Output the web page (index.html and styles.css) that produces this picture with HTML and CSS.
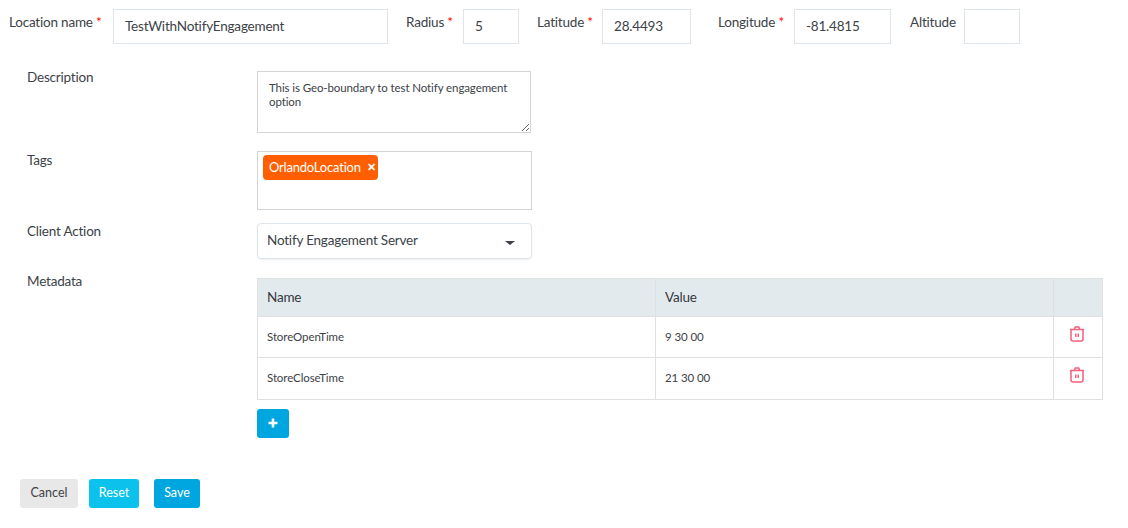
FILE: index.html
```html
<!DOCTYPE html>
<html lang="en">
<head>
  <meta charset="UTF-8" />
  <meta name="viewport" content="width=device-width, initial-scale=1" />
  <title>Edit Location</title>
  <link rel="stylesheet" href="styles.css">
</head>
<body>

<form class="location-form">
  <div class="top-row">
    <label class="top-label label-name">Location name <span class="req">*</span></label>
    <input class="text-input input-name" type="text" value="TestWithNotifyEngagement" />
    <label class="top-label label-radius">Radius <span class="req">*</span></label>
    <input class="text-input input-radius" type="text" value="5" />
    <label class="top-label label-lat">Latitude <span class="req">*</span></label>
    <input class="text-input input-lat" type="text" value="28.4493" />
    <label class="top-label label-long">Longitude <span class="req">*</span></label>
    <input class="text-input input-long" type="text" value="-81.4815" />
    <label class="top-label label-alt">Altitude</label>
    <input class="text-input input-alt" type="text" value="" />
  </div>

  <div class="form-row row-description">
    <label class="row-label">Description</label>
    <textarea class="description">This is Geo-boundary to test Notify engagement option</textarea>
  </div>

  <div class="form-row row-tags">
    <label class="row-label">Tags</label>
    <div class="tags-box">
      <span class="tag">OrlandoLocation<span class="tag-x">&#10005;</span></span>
    </div>
  </div>

  <div class="form-row row-action">
    <label class="row-label">Client Action</label>
    <div class="select-box">
      <span>Notify Engagement Server</span>
      <span class="caret"></span>
    </div>
  </div>

  <div class="form-row row-metadata">
    <label class="row-label">Metadata</label>
    <div class="metadata">
      <table class="meta-table">
        <thead>
          <tr>
            <th class="col-name">Name</th>
            <th class="col-value">Value</th>
            <th class="col-del"></th>
          </tr>
        </thead>
        <tbody>
          <tr>
            <td>StoreOpenTime</td>
            <td>9 30 00</td>
            <td class="del-cell">
              <svg class="trash" viewBox="0 0 16 16" width="16" height="16">
                <path d="M5.5 3 L6.2 1 L9.8 1 L10.5 3 M1 3.6 L15 3.6 M2 3.6 L2 13 Q2 15 4 15 L12 15 Q14 15 14 13 L14 3.6 M6.8 7.5 L6.8 11 M9.2 7.5 L9.2 11" fill="none" stroke="#f0627e" stroke-width="1.5"/>
              </svg>
            </td>
          </tr>
          <tr>
            <td>StoreCloseTime</td>
            <td>21 30 00</td>
            <td class="del-cell">
              <svg class="trash" viewBox="0 0 16 16" width="16" height="16">
                <path d="M5.5 3 L6.2 1 L9.8 1 L10.5 3 M1 3.6 L15 3.6 M2 3.6 L2 13 Q2 15 4 15 L12 15 Q14 15 14 13 L14 3.6 M6.8 7.5 L6.8 11 M9.2 7.5 L9.2 11" fill="none" stroke="#f0627e" stroke-width="1.5"/>
              </svg>
            </td>
          </tr>
        </tbody>
      </table>
      <button class="btn-add" type="button">
        <svg viewBox="0 0 12 12" width="12" height="12"><path d="M6 1.5 L6 10.5 M1.5 6 L10.5 6" stroke="#fff" stroke-width="2.6" fill="none"/></svg>
      </button>
    </div>
  </div>

  <div class="actions">
    <button class="btn btn-cancel" type="button">Cancel</button>
    <button class="btn btn-reset" type="button">Reset</button>
    <button class="btn btn-save" type="button">Save</button>
  </div>
</form>

</body>
</html>
```

FILE: styles.css
```css
body {
  margin: 0;
  background: #fff;
  font-family: Lato, "Open Sans", sans-serif;
  font-size: 13.5px;
  letter-spacing: -0.2px;
  color: #3c4248;
  overflow: hidden;
}
.location-form {
  padding-top: 9px;
}

/* top row */
.top-row {
  display: flex;
  align-items: flex-start;
  padding-left: 9px;
}
.top-label {
  line-height: 27px;
  white-space: nowrap;
}
.req {
  color: #f00;
}
.text-input {
  box-sizing: border-box;
  height: 35px;
  border: 1px solid #dde4ea;
  padding: 0 10px 2px 11px;
  font-family: inherit;
  font-size: 13.5px;
  letter-spacing: -0.2px;
  color: #3c4248;
  outline: none;
}
.label-name { width: 104px; }
.input-name { width: 275px; }
.label-radius { width: 57px; margin-left: 18px; }
.input-radius { width: 56px; }
.label-lat { width: 65px; margin-left: 18px; }
.input-lat { width: 89px; }
.label-long { width: 76px; margin-left: 27px; }
.input-long { width: 97px; }
.label-alt { width: 54px; margin-left: 19px; }
.input-alt { width: 56px; }

/* label + control rows */
.form-row {
  display: flex;
  align-items: flex-start;
  padding-left: 27px;
}
.row-label {
  width: 230px;
  flex: none;
  line-height: 12px;
}
.row-description { margin-top: 27px; }
.row-tags { margin-top: 18px; }
.row-tags .row-label { padding-top: 3px; }
.row-action { margin-top: 13px; }
.row-action .row-label { padding-top: 2px; }
.row-metadata { margin-top: 19px; }
.row-metadata .row-label { margin-top: -3px; }

.description {
  box-sizing: border-box;
  display: block;
  width: 274px;
  height: 62px;
  border: 1px solid #d4d4d4;
  padding: 9px 11px;
  font-family: inherit;
  font-size: 11.5px;
  letter-spacing: -0.1px;
  line-height: 14px;
  color: #3c4248;
  outline: none;
  resize: vertical;
}
.tags-box {
  box-sizing: border-box;
  width: 275px;
  height: 59px;
  border: 1px solid #d4d4d4;
  padding: 3px 5px;
}
.tag {
  display: inline-block;
  background: #ff5f00;
  color: #fff;
  border-radius: 4px;
  padding: 0 2px 0 6px;
  height: 25px;
  line-height: 24px;
  font-size: 13px;
}
.tag-x {
  font-size: 11px;
  font-weight: bold;
  margin-left: 6px;
  vertical-align: 1px;
}
.select-box {
  box-sizing: border-box;
  display: flex;
  align-items: center;
  justify-content: space-between;
  width: 275px;
  height: 36px;
  border: 1px solid #dde4ea;
  border-radius: 4px;
  padding: 0 16px 2px 9px;
  box-shadow: 0 1px 2px #eef1f3;
}
.caret {
  width: 0;
  height: 0;
  margin-top: 6px;
  border-left: 5px solid transparent;
  border-right: 5px solid transparent;
  border-top: 4px solid #3c4248;
}

/* metadata table */
.metadata {
  width: 846px;
}
.meta-table {
  width: 846px;
  border-collapse: collapse;
  table-layout: fixed;
}
.meta-table th,
.meta-table td {
  border: 1px solid #e0e0e0;
  padding: 0 9px;
  text-align: left;
}
.meta-table th {
  background: #e3eaee;
  height: 36px;
  padding-bottom: 1px;
  font-weight: normal;
  color: #33383d;
}
.meta-table td {
  height: 38px;
  padding-bottom: 2px;
  font-size: 11.5px;
  letter-spacing: -0.1px;
}
.meta-table tr:last-child td {
  height: 39px;
}
.col-name { width: 379px; }
.col-value { width: 379px; }
.meta-table .del-cell {
  padding: 0;
  vertical-align: top;
}
.trash {
  display: block;
  margin: 9px 17px 0 15px;
}
.btn-add {
  display: flex;
  align-items: center;
  justify-content: center;
  width: 32px;
  height: 29px;
  margin-top: 9px;
  padding: 0 0 2px;
  border: none;
  border-radius: 3px;
  background: #00a6df;
}

/* bottom buttons */
.actions {
  display: flex;
  margin-top: 41px;
  padding-left: 20px;
}
.btn {
  height: 29px;
  border: none;
  border-radius: 3px;
  padding: 0 0 2px;
  font-family: inherit;
  font-size: 12.5px;
}
.btn-cancel {
  width: 58px;
  background: #e9e8e9;
  color: #3c4248;
}
.btn-reset {
  width: 50px;
  margin-left: 11px;
  background: #0bc2ec;
  color: #fff;
}
.btn-save {
  width: 46px;
  margin-left: 15px;
  background: #00a6df;
  color: #fff;
}
```
